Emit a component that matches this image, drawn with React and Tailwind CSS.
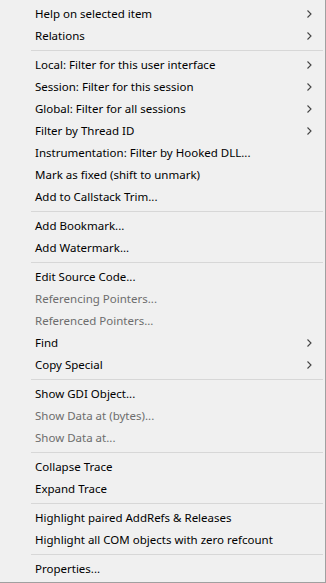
const groups = [
  [
    { label: 'Help on selected item', sub: true },
    { label: 'Relations', sub: true },
  ],
  [
    { label: 'Local: Filter for this user interface', sub: true },
    { label: 'Session: Filter for this session', sub: true },
    { label: 'Global: Filter for all sessions', sub: true },
    { label: 'Filter by Thread ID', sub: true },
    { label: 'Instrumentation: Filter by Hooked DLL...' },
    { label: 'Mark as fixed (shift to unmark)' },
    { label: 'Add to Callstack Trim...' },
  ],
  [{ label: 'Add Bookmark...' }, { label: 'Add Watermark...' }],
  [
    { label: 'Edit Source Code...' },
    { label: 'Referencing Pointers...', disabled: true },
    { label: 'Referenced Pointers...', disabled: true },
    { label: 'Find', sub: true },
    { label: 'Copy Special', sub: true },
  ],
  [
    { label: 'Show GDI Object...' },
    { label: 'Show Data at (bytes)...', disabled: true },
    { label: 'Show Data at...', disabled: true },
  ],
  [{ label: 'Collapse Trace' }, { label: 'Expand Trace' }],
  [
    { label: 'Highlight paired AddRefs & Releases' },
    { label: 'Highlight all COM objects with zero refcount' },
  ],
  [{ label: 'Properties...' }],
];

function Chevron() {
  return (
    <svg width="5" height="8" viewBox="0 0 5 8" className="text-[#444]">
      <path d="M0.5 0.5 L4 4 L0.5 7.5" fill="none" stroke="currentColor" strokeWidth="1.1" />
    </svg>
  );
}

function Item({ label, sub, disabled }) {
  return (
    <div className="flex h-[22px] items-center pl-[35px] pr-[13px]">
      <span className={`flex-1 whitespace-nowrap ${disabled ? 'text-[#6d6d6d]' : 'text-black'}`}>{label}</span>
      {sub && <Chevron />}
    </div>
  );
}

export default function App() {
  return (
    <div className="h-[583px] w-[326px] border-r border-b border-[#a0a0a0] bg-[#f0f0f0] pt-[3px] text-[11.5px] leading-none" style={{ fontFamily: '"Noto Sans", "Open Sans", sans-serif' }}>
      {groups.map((g, i) => (
        <div key={i}>
          {i > 0 && (
            <div className="py-[3px] pl-[31px] pr-[2px]">
              <div className="h-px bg-[#d7d7d7]" />
            </div>
          )}
          {g.map((it) => (
            <Item key={it.label} {...it} />
          ))}
        </div>
      ))}
    </div>
  );
}
